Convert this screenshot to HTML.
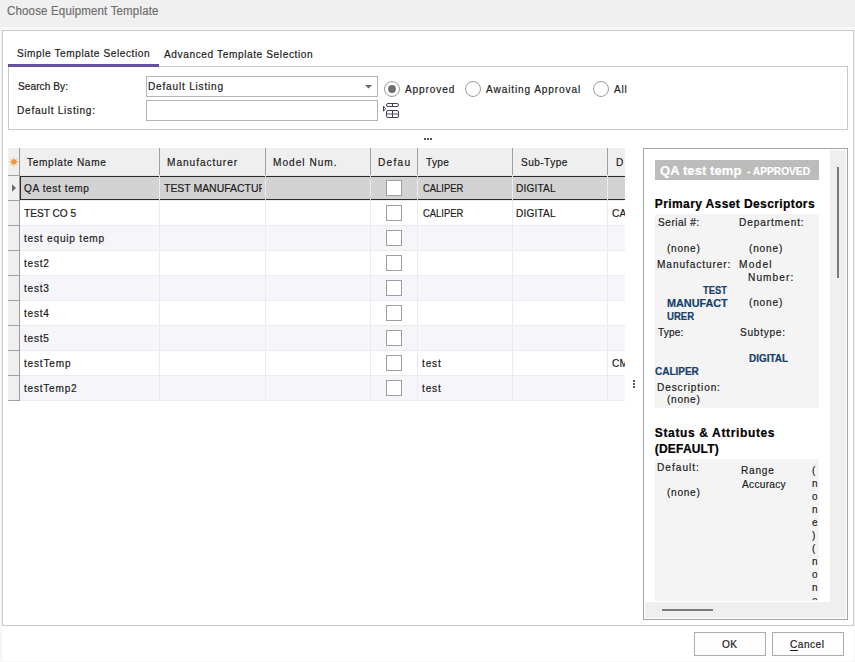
<!DOCTYPE html>
<html><head><meta charset="utf-8"><title>Choose Equipment Template</title><style>
html,body{margin:0;padding:0;}
body{width:855px;height:662px;position:relative;overflow:hidden;background:#ffffff;font-family:"Liberation Sans", sans-serif;}
.t{position:absolute;white-space:nowrap;line-height:1.3;transform-origin:0 0;-webkit-text-stroke:0.2px currentColor;font-family:"Liberation Sans", sans-serif;}
.bl{display:inline-block;width:0;height:0;vertical-align:baseline;}
.b{position:absolute;box-sizing:border-box;}

</style></head><body>

<div class="b" style="left:0;top:0;width:855px;height:27px;background:#f0f0f0"></div>
<div class="b" style="left:0;top:27px;width:855px;height:3px;background:#f8f9fb"></div>
<div class="b" style="left:0;top:27px;width:2px;height:635px;background:#f4f6f8"></div>
<div class="b" style="left:854px;top:27px;width:1px;height:635px;background:#f4f6f8"></div>
<div class="b" style="left:0;top:661px;width:855px;height:1px;background:#f4f6f8"></div>
<div class="b" style="left:2px;top:30px;width:852px;height:596px;border:1px solid #c9c9c9;background:#fff"></div>
<!-- search panel -->
<div class="b" style="left:8px;top:66px;width:840px;height:64px;border:1px solid #c9c9c9"></div>
<div class="b" style="left:8px;top:64px;width:151px;height:3px;background:#674fa4"></div>
<div class="b" style="left:146px;top:76px;width:232px;height:21px;border:1px solid #b4b4b4;background:#fff"></div>
<svg class="b" style="left:365px;top:85px" width="7" height="4"><path d="M0 0H7L3.5 3.5Z" fill="#666"/></svg>
<div class="b" style="left:146px;top:100px;width:232px;height:21px;border:1px solid #b4b4b4;background:#fff"></div>
<svg class="b" style="left:378px;top:98px" width="26" height="26">
  <g fill="none" stroke="#463e5c" stroke-width="1">
  <rect x="8.5" y="5.5" width="12" height="3" rx="1.5"/>
  <line x1="14.5" y1="5.5" x2="14.5" y2="8.5"/>
  <path d="M5.5 8.2 L7.6 10.7 L5.5 13.2Z"/>
  <rect x="8.5" y="12.5" width="12" height="7" rx="1.5"/>
  <line x1="14.5" y1="12.5" x2="14.5" y2="19.5"/>
  <line x1="8.5" y1="16" x2="20.5" y2="16" stroke-opacity="0.7" stroke-width="1.3"/>
  </g>
</svg>
<svg class="b" style="left:383px;top:80px" width="18" height="18"><circle cx="9" cy="9" r="7.5" fill="#fff" stroke="#9c9c9c"/><circle cx="9" cy="9" r="3.9" fill="#6e6e6e"/></svg>
<svg class="b" style="left:464px;top:80px" width="18" height="18"><circle cx="9" cy="9" r="7.5" fill="#fff" stroke="#9c9c9c"/></svg>
<svg class="b" style="left:592px;top:80px" width="18" height="18"><circle cx="9" cy="9" r="7.5" fill="#fff" stroke="#9c9c9c"/></svg>
<!-- splitter dots -->
<div class="b" style="left:424px;top:138px;width:2px;height:2px;background:#555"></div>
<div class="b" style="left:427px;top:138px;width:2px;height:2px;background:#555"></div>
<div class="b" style="left:430px;top:138px;width:2px;height:2px;background:#555"></div>
<div class="b" style="left:633px;top:380px;width:2px;height:2px;background:#555"></div>
<div class="b" style="left:633px;top:383px;width:2px;height:2px;background:#555"></div>
<div class="b" style="left:633px;top:386px;width:2px;height:2px;background:#555"></div>
<div class="b" style="left:8px;top:148px;width:617px;height:27px;background:#efefef"></div>
<div class="b" style="left:8px;top:175px;width:11px;height:226px;background:#efefef"></div>
<div class="b" style="left:20px;top:175px;width:605px;height:25px;background:#f5f5fa"></div>
<div class="b" style="left:20px;top:200px;width:605px;height:25px;background:#ffffff"></div>
<div class="b" style="left:20px;top:225px;width:605px;height:25px;background:#f5f5fa"></div>
<div class="b" style="left:20px;top:250px;width:605px;height:25px;background:#ffffff"></div>
<div class="b" style="left:20px;top:275px;width:605px;height:25px;background:#f5f5fa"></div>
<div class="b" style="left:20px;top:300px;width:605px;height:25px;background:#ffffff"></div>
<div class="b" style="left:20px;top:325px;width:605px;height:25px;background:#f5f5fa"></div>
<div class="b" style="left:20px;top:350px;width:605px;height:25px;background:#ffffff"></div>
<div class="b" style="left:20px;top:375px;width:605px;height:25px;background:#f5f5fa"></div>
<div class="b" style="left:8px;top:175px;width:11px;height:1px;background:#a0a0a0"></div>
<div class="b" style="left:8px;top:200px;width:11px;height:1px;background:#a0a0a0"></div>
<div class="b" style="left:20px;top:200px;width:605px;height:1px;background:#ebebeb"></div>
<div class="b" style="left:8px;top:225px;width:11px;height:1px;background:#a0a0a0"></div>
<div class="b" style="left:20px;top:225px;width:605px;height:1px;background:#ebebeb"></div>
<div class="b" style="left:8px;top:250px;width:11px;height:1px;background:#a0a0a0"></div>
<div class="b" style="left:20px;top:250px;width:605px;height:1px;background:#ebebeb"></div>
<div class="b" style="left:8px;top:275px;width:11px;height:1px;background:#a0a0a0"></div>
<div class="b" style="left:20px;top:275px;width:605px;height:1px;background:#ebebeb"></div>
<div class="b" style="left:8px;top:300px;width:11px;height:1px;background:#a0a0a0"></div>
<div class="b" style="left:20px;top:300px;width:605px;height:1px;background:#ebebeb"></div>
<div class="b" style="left:8px;top:325px;width:11px;height:1px;background:#a0a0a0"></div>
<div class="b" style="left:20px;top:325px;width:605px;height:1px;background:#ebebeb"></div>
<div class="b" style="left:8px;top:350px;width:11px;height:1px;background:#a0a0a0"></div>
<div class="b" style="left:20px;top:350px;width:605px;height:1px;background:#ebebeb"></div>
<div class="b" style="left:8px;top:375px;width:11px;height:1px;background:#a0a0a0"></div>
<div class="b" style="left:20px;top:375px;width:605px;height:1px;background:#ebebeb"></div>
<div class="b" style="left:8px;top:400px;width:11px;height:1px;background:#a0a0a0"></div>
<div class="b" style="left:20px;top:400px;width:605px;height:1px;background:#ebebeb"></div>
<div class="b" style="left:20px;top:176px;width:605px;height:24px;background:#d3d3d3;border-top:1px solid #2a2a2a;border-bottom:1px solid #2a2a2a;border-left:1px solid #2a2a2a"></div>
<div class="b" style="left:20px;top:175px;width:605px;height:1px;background:#e6e6e6"></div>
<div class="b" style="left:19px;top:148px;width:1px;height:253px;background:#9a9a9a"></div>
<div class="b" style="left:159px;top:148px;width:1px;height:27px;background:#a0a0a0"></div>
<div class="b" style="left:159px;top:175px;width:1px;height:225px;background:#ebebeb"></div>
<div class="b" style="left:265px;top:148px;width:1px;height:27px;background:#a0a0a0"></div>
<div class="b" style="left:265px;top:175px;width:1px;height:225px;background:#ebebeb"></div>
<div class="b" style="left:370px;top:148px;width:1px;height:27px;background:#a0a0a0"></div>
<div class="b" style="left:370px;top:175px;width:1px;height:225px;background:#ebebeb"></div>
<div class="b" style="left:417px;top:148px;width:1px;height:27px;background:#a0a0a0"></div>
<div class="b" style="left:417px;top:175px;width:1px;height:225px;background:#ebebeb"></div>
<div class="b" style="left:512px;top:148px;width:1px;height:27px;background:#a0a0a0"></div>
<div class="b" style="left:512px;top:175px;width:1px;height:225px;background:#ebebeb"></div>
<div class="b" style="left:607px;top:148px;width:1px;height:27px;background:#a0a0a0"></div>
<div class="b" style="left:607px;top:175px;width:1px;height:225px;background:#ebebeb"></div>
<div class="b" style="left:386px;top:180px;width:16px;height:16px;border:1px solid #9e9e9e;background:#fff"></div>
<div class="b" style="left:386px;top:205px;width:16px;height:16px;border:1px solid #9e9e9e;background:#fff"></div>
<div class="b" style="left:386px;top:230px;width:16px;height:16px;border:1px solid #9e9e9e;background:#fff"></div>
<div class="b" style="left:386px;top:255px;width:16px;height:16px;border:1px solid #9e9e9e;background:#fff"></div>
<div class="b" style="left:386px;top:280px;width:16px;height:16px;border:1px solid #9e9e9e;background:#fff"></div>
<div class="b" style="left:386px;top:305px;width:16px;height:16px;border:1px solid #9e9e9e;background:#fff"></div>
<div class="b" style="left:386px;top:330px;width:16px;height:16px;border:1px solid #9e9e9e;background:#fff"></div>
<div class="b" style="left:386px;top:355px;width:16px;height:16px;border:1px solid #9e9e9e;background:#fff"></div>
<div class="b" style="left:386px;top:380px;width:16px;height:16px;border:1px solid #9e9e9e;background:#fff"></div>
<svg class="b" style="left:6px;top:154px" width="16" height="16">
<g stroke="#f4a65a" stroke-width="1" stroke-linecap="round" stroke-opacity="0.8"><line x1="7.85" y1="3.6" x2="7.85" y2="12.1"/><line x1="3.6" y1="7.85" x2="12.1" y2="7.85"/><line x1="4.9" y1="4.9" x2="10.8" y2="10.8"/><line x1="10.8" y1="4.9" x2="4.9" y2="10.8"/></g>
<circle cx="7.85" cy="7.85" r="2.7" fill="#f0953a"/></svg>
<svg class="b" style="left:11px;top:183px" width="8" height="10"><path d="M1 1.2L5 5L1 8.8Z" fill="#6a6a6a"/></svg>
<div class="b" style="left:643px;top:148px;width:205px;height:472px;border:1px solid #a3a5ac;background:#fff"></div>
<div class="b" style="left:830px;top:150px;width:16px;height:468px;background:#efefef"></div>
<div class="b" style="left:837px;top:167px;width:2px;height:111px;background:#7a7a7a"></div>
<div class="b" style="left:645px;top:602px;width:201px;height:16px;background:#efefef"></div>
<div class="b" style="left:662px;top:609px;width:51px;height:2px;background:#7a7a7a"></div>
<div class="b" style="left:655px;top:160px;width:164px;height:20px;background:#bcbcbc"></div>
<div class="b" style="left:655px;top:214px;width:164px;height:194px;background:#f4f4f4"></div>
<div class="b" style="left:655px;top:459px;width:164px;height:142px;background:#f4f4f4"></div>
<!-- buttons -->
<div class="b" style="left:694px;top:632px;width:72px;height:24px;border:1px solid #adadad;background:#fdfdfd"></div>
<div class="b" style="left:772px;top:632px;width:72px;height:24px;border:1px solid #adadad;background:#fdfdfd"></div>
<div class="b" style="left:790px;top:650px;width:8px;height:1px;background:#1b1b1b"></div>

<span class="t" id="t0" style="left:7.00px;top:3.00px;font-size:12.5px;font-weight:normal;color:#6e6e6e;transform:scaleX(0.9200);letter-spacing:0.181px;">Choose Equipment Template</span><span class="t" id="t1" style="left:17.00px;top:46.00px;font-size:11px;font-weight:normal;color:#1b1b1b;transform:scaleX(0.9200);letter-spacing:0.611px;">Simple Template Selection</span><span class="t" id="t2" style="left:164.40px;top:47.00px;font-size:11px;font-weight:normal;color:#1b1b1b;transform:scaleX(0.9200);letter-spacing:0.648px;">Advanced Template Selection</span><span class="t" id="t3" style="left:17.60px;top:79.00px;font-size:11px;font-weight:normal;color:#1b1b1b;transform:scaleX(0.9200);letter-spacing:0.060px;">Search By:</span><span class="t" id="t4" style="left:16.60px;top:103.00px;font-size:11px;font-weight:normal;color:#1b1b1b;transform:scaleX(0.9200);letter-spacing:0.797px;">Default Listing:</span><span class="t" id="t5" style="left:148.00px;top:79.00px;font-size:11px;font-weight:normal;color:#1b1b1b;transform:scaleX(0.9200);letter-spacing:0.854px;">Default Listing</span><span class="t" id="t6" style="left:405.40px;top:82.00px;font-size:11px;font-weight:normal;color:#1b1b1b;transform:scaleX(0.9200);letter-spacing:0.932px;">Approved</span><span class="t" id="t7" style="left:486.00px;top:82.00px;font-size:11px;font-weight:normal;color:#1b1b1b;transform:scaleX(0.9200);letter-spacing:0.951px;">Awaiting Approval</span><span class="t" id="t8" style="left:614.20px;top:82.00px;font-size:11px;font-weight:normal;color:#1b1b1b;transform:scaleX(0.9200);letter-spacing:0.815px;">All</span><span class="t" id="t9" style="left:26.60px;top:155.00px;font-size:11px;font-weight:normal;color:#1b1b1b;transform:scaleX(0.9200);letter-spacing:0.725px;">Template Name</span><span class="t" id="t10" style="left:167.40px;top:155.00px;font-size:11px;font-weight:normal;color:#1b1b1b;transform:scaleX(0.9200);letter-spacing:1.038px;">Manufacturer</span><span class="t" id="t11" style="left:273.00px;top:155.00px;font-size:11px;font-weight:normal;color:#1b1b1b;transform:scaleX(0.9200);letter-spacing:1.087px;">Model Num.</span><span class="t" id="t12" style="left:378.00px;top:155.00px;font-size:11px;font-weight:normal;color:#1b1b1b;transform:scaleX(0.9200);letter-spacing:1.359px;">Defau</span><span class="t" id="t13" style="left:425.80px;top:155.00px;font-size:11px;font-weight:normal;color:#1b1b1b;transform:scaleX(0.9200);letter-spacing:0.362px;">Type</span><span class="t" id="t14" style="left:521.00px;top:155.00px;font-size:11px;font-weight:normal;color:#1b1b1b;transform:scaleX(0.9200);letter-spacing:0.466px;">Sub-Type</span><span class="t" id="t15" style="left:24.00px;top:181.00px;font-size:11px;font-weight:normal;color:#1b1b1b;transform:scaleX(0.9200);letter-spacing:0.642px;">QA test temp</span><span class="t" id="t16" style="left:24.00px;top:206.00px;font-size:11px;font-weight:normal;color:#1b1b1b;transform:scaleX(0.9200);letter-spacing:0.003px;">TEST CO 5</span><span class="t" id="t17" style="left:24.00px;top:231.00px;font-size:11px;font-weight:normal;color:#1b1b1b;transform:scaleX(0.9200);letter-spacing:0.854px;">test equip temp</span><span class="t" id="t18" style="left:24.00px;top:256.00px;font-size:11px;font-weight:normal;color:#1b1b1b;transform:scaleX(0.9200);letter-spacing:0.815px;">test2</span><span class="t" id="t19" style="left:24.00px;top:281.00px;font-size:11px;font-weight:normal;color:#1b1b1b;transform:scaleX(0.9200);letter-spacing:0.815px;">test3</span><span class="t" id="t20" style="left:24.00px;top:306.00px;font-size:11px;font-weight:normal;color:#1b1b1b;transform:scaleX(0.9200);letter-spacing:0.815px;">test4</span><span class="t" id="t21" style="left:24.00px;top:331.00px;font-size:11px;font-weight:normal;color:#1b1b1b;transform:scaleX(0.9200);letter-spacing:0.815px;">test5</span><span class="t" id="t22" style="left:24.00px;top:356.00px;font-size:11px;font-weight:normal;color:#1b1b1b;transform:scaleX(0.9200);letter-spacing:0.854px;">testTemp</span><span class="t" id="t23" style="left:24.00px;top:381.00px;font-size:11px;font-weight:normal;color:#1b1b1b;transform:scaleX(0.9200);letter-spacing:0.815px;">testTemp2</span><span class="t" id="t24" style="left:163.60px;top:181.00px;font-size:11px;font-weight:normal;color:#1b1b1b;transform:scaleX(0.9500);letter-spacing:0.000px;width:102.53px;overflow:hidden;">TEST MANUFACTURER</span><span class="t" id="t25" style="left:422.60px;top:181.00px;font-size:11px;font-weight:normal;color:#1b1b1b;transform:scaleX(0.8564);letter-spacing:0.000px;">CALIPER</span><span class="t" id="t26" style="left:516.20px;top:181.00px;font-size:11px;font-weight:normal;color:#1b1b1b;transform:scaleX(0.9200);letter-spacing:0.181px;">DIGITAL</span><span class="t" id="t27" style="left:422.60px;top:206.00px;font-size:11px;font-weight:normal;color:#1b1b1b;transform:scaleX(0.8564);letter-spacing:0.000px;">CALIPER</span><span class="t" id="t28" style="left:516.20px;top:206.00px;font-size:11px;font-weight:normal;color:#1b1b1b;transform:scaleX(0.9200);letter-spacing:0.181px;">DIGITAL</span><span class="t" id="t29" style="left:422.20px;top:356.00px;font-size:11px;font-weight:normal;color:#1b1b1b;transform:scaleX(0.9200);letter-spacing:0.906px;">test</span><span class="t" id="t30" style="left:422.20px;top:381.00px;font-size:11px;font-weight:normal;color:#1b1b1b;transform:scaleX(0.9200);letter-spacing:0.906px;">test</span><span class="t" id="t31" style="left:615.80px;top:155.00px;font-size:11px;font-weight:normal;color:#1b1b1b;transform:scaleX(0.9200);letter-spacing:0.000px;width:10.00px;overflow:hidden;">D</span><span class="t" id="t32" style="left:612.20px;top:206.00px;font-size:11px;font-weight:normal;color:#1b1b1b;transform:scaleX(0.9300);letter-spacing:0.000px;width:13.76px;overflow:hidden;">CALIPER</span><span class="t" id="t33" style="left:612.20px;top:356.00px;font-size:11px;font-weight:normal;color:#1b1b1b;transform:scaleX(0.9300);letter-spacing:0.000px;width:13.76px;overflow:hidden;">CMM</span><span class="t" id="t34" style="left:660.00px;top:163.00px;font-size:13px;font-weight:bold;color:#ffffff;transform:scaleX(1.0000);letter-spacing:0.091px;">QA test temp</span><span class="t" id="t35" style="left:747.00px;top:165.00px;font-size:10.5px;font-weight:bold;color:#ffffff;transform:scaleX(0.9697);letter-spacing:0.000px;">- APPROVED</span><span class="t" id="t36" style="left:654.80px;top:197.00px;font-size:12px;font-weight:bold;color:#000000;transform:scaleX(1.0000);letter-spacing:0.396px;">Primary Asset Descriptors</span><span class="t" id="t37" style="left:658.40px;top:215.00px;font-size:11px;font-weight:normal;color:#1b1b1b;transform:scaleX(0.9200);letter-spacing:0.543px;">Serial #:</span><span class="t" id="t38" style="left:739.00px;top:215.00px;font-size:11px;font-weight:normal;color:#1b1b1b;transform:scaleX(0.9200);letter-spacing:0.978px;">Department:</span><span class="t" id="t39" style="left:666.80px;top:241.00px;font-size:11px;font-weight:normal;color:#1b1b1b;transform:scaleX(0.9200);letter-spacing:0.761px;">(none)</span><span class="t" id="t40" style="left:749.00px;top:241.00px;font-size:11px;font-weight:normal;color:#1b1b1b;transform:scaleX(0.9200);letter-spacing:0.870px;">(none)</span><span class="t" id="t41" style="left:657.40px;top:257.00px;font-size:11px;font-weight:normal;color:#1b1b1b;transform:scaleX(0.9200);letter-spacing:0.996px;">Manufacturer:</span><span class="t" id="t42" style="left:739.00px;top:257.00px;font-size:11px;font-weight:normal;color:#1b1b1b;transform:scaleX(0.9200);letter-spacing:1.359px;">Model</span><span class="t" id="t43" style="left:748.40px;top:270.00px;font-size:11px;font-weight:normal;color:#1b1b1b;transform:scaleX(0.9200);letter-spacing:1.178px;">Number:</span><span class="t" id="t44" style="left:703.00px;top:283.00px;font-size:11px;font-weight:bold;color:#163f6c;transform:scaleX(0.8478);letter-spacing:0.000px;">TEST</span><span class="t" id="t45" style="left:667.40px;top:296.00px;font-size:11px;font-weight:bold;color:#163f6c;transform:scaleX(0.9839);letter-spacing:0.000px;">MANUFACT</span><span class="t" id="t46" style="left:667.40px;top:309.00px;font-size:11px;font-weight:bold;color:#163f6c;transform:scaleX(0.8730);letter-spacing:0.000px;">URER</span><span class="t" id="t47" style="left:749.00px;top:295.00px;font-size:11px;font-weight:normal;color:#1b1b1b;transform:scaleX(0.9200);letter-spacing:0.870px;">(none)</span><span class="t" id="t48" style="left:658.40px;top:325.00px;font-size:11px;font-weight:normal;color:#1b1b1b;transform:scaleX(0.9200);letter-spacing:0.136px;">Type:</span><span class="t" id="t49" style="left:740.00px;top:325.00px;font-size:11px;font-weight:normal;color:#1b1b1b;transform:scaleX(0.9200);letter-spacing:0.776px;">Subtype:</span><span class="t" id="t50" style="left:749.40px;top:351.00px;font-size:11px;font-weight:bold;color:#163f6c;transform:scaleX(0.9070);letter-spacing:0.000px;">DIGITAL</span><span class="t" id="t51" style="left:654.80px;top:364.00px;font-size:11px;font-weight:bold;color:#163f6c;transform:scaleX(0.9071);letter-spacing:0.000px;">CALIPER</span><span class="t" id="t52" style="left:657.40px;top:380.00px;font-size:11px;font-weight:normal;color:#1b1b1b;transform:scaleX(0.9200);letter-spacing:0.939px;">Description:</span><span class="t" id="t53" style="left:666.80px;top:392.00px;font-size:11px;font-weight:normal;color:#1b1b1b;transform:scaleX(0.9200);letter-spacing:0.761px;">(none)</span><span class="t" id="t54" style="left:654.80px;top:426.00px;font-size:12px;font-weight:bold;color:#000000;transform:scaleX(1.0000);letter-spacing:0.639px;">Status &amp; Attributes</span><span class="t" id="t55" style="left:654.80px;top:442.00px;font-size:12px;font-weight:bold;color:#000000;transform:scaleX(1.0000);letter-spacing:0.188px;">(DEFAULT)</span><span class="t" id="t56" style="left:657.40px;top:460.00px;font-size:11px;font-weight:normal;color:#1b1b1b;transform:scaleX(0.9200);letter-spacing:1.087px;">Default:</span><span class="t" id="t57" style="left:741.20px;top:463.00px;font-size:11px;font-weight:normal;color:#1b1b1b;transform:scaleX(0.9200);letter-spacing:0.815px;">Range</span><span class="t" id="t58" style="left:742.20px;top:477.00px;font-size:11px;font-weight:normal;color:#1b1b1b;transform:scaleX(0.9200);letter-spacing:0.311px;">Accuracy</span><span class="t" id="t59" style="left:666.80px;top:485.00px;font-size:11px;font-weight:normal;color:#1b1b1b;transform:scaleX(0.9200);letter-spacing:0.761px;">(none)</span><span class="t" id="t60" style="left:812.00px;top:463.00px;font-size:11px;font-weight:normal;color:#1b1b1b;transform:scaleX(0.9200);letter-spacing:0.000px;height:137.00px;overflow:hidden;">(</span><span class="t" id="t61" style="left:812.00px;top:476.00px;font-size:11px;font-weight:normal;color:#1b1b1b;transform:scaleX(0.9200);letter-spacing:0.000px;height:124.00px;overflow:hidden;">n</span><span class="t" id="t62" style="left:812.00px;top:489.00px;font-size:11px;font-weight:normal;color:#1b1b1b;transform:scaleX(0.9200);letter-spacing:0.000px;height:111.00px;overflow:hidden;">o</span><span class="t" id="t63" style="left:812.00px;top:502.00px;font-size:11px;font-weight:normal;color:#1b1b1b;transform:scaleX(0.9200);letter-spacing:0.000px;height:98.00px;overflow:hidden;">n</span><span class="t" id="t64" style="left:812.00px;top:515.00px;font-size:11px;font-weight:normal;color:#1b1b1b;transform:scaleX(0.9200);letter-spacing:0.000px;height:85.00px;overflow:hidden;">e</span><span class="t" id="t65" style="left:812.00px;top:528.00px;font-size:11px;font-weight:normal;color:#1b1b1b;transform:scaleX(0.9200);letter-spacing:0.000px;height:72.00px;overflow:hidden;">)</span><span class="t" id="t66" style="left:812.00px;top:541.00px;font-size:11px;font-weight:normal;color:#1b1b1b;transform:scaleX(0.9200);letter-spacing:0.000px;height:59.00px;overflow:hidden;">(</span><span class="t" id="t67" style="left:812.00px;top:554.00px;font-size:11px;font-weight:normal;color:#1b1b1b;transform:scaleX(0.9200);letter-spacing:0.000px;height:46.00px;overflow:hidden;">n</span><span class="t" id="t68" style="left:812.00px;top:567.00px;font-size:11px;font-weight:normal;color:#1b1b1b;transform:scaleX(0.9200);letter-spacing:0.000px;height:33.00px;overflow:hidden;">o</span><span class="t" id="t69" style="left:812.00px;top:580.00px;font-size:11px;font-weight:normal;color:#1b1b1b;transform:scaleX(0.9200);letter-spacing:0.000px;height:20.00px;overflow:hidden;">n</span><span class="t" id="t70" style="left:812.00px;top:593.00px;font-size:11px;font-weight:normal;color:#1b1b1b;transform:scaleX(0.9200);letter-spacing:0.000px;height:7.00px;overflow:hidden;">e</span><span class="t" id="t71" style="left:722.20px;top:637.00px;font-size:11px;font-weight:normal;color:#1b1b1b;transform:scaleX(0.9200);letter-spacing:0.543px;">OK</span><span class="t" id="t72" style="left:789.60px;top:637.00px;font-size:11px;font-weight:normal;color:#1b1b1b;transform:scaleX(0.9200);letter-spacing:0.543px;">Cancel</span>
</body></html>
